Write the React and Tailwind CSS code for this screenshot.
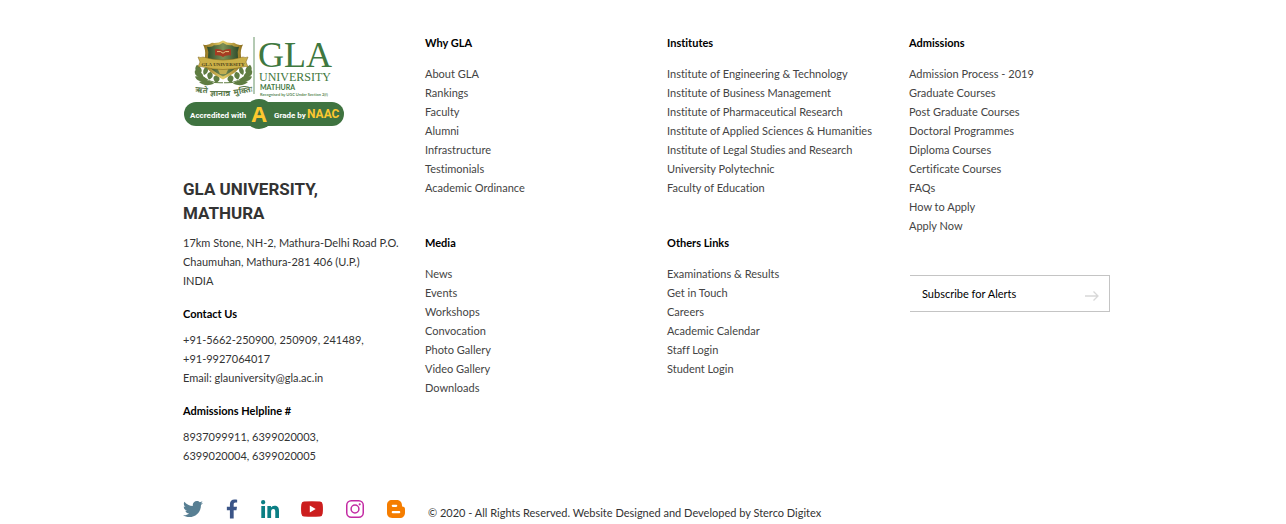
import React from "react";

const why = ["About GLA", "Rankings", "Faculty", "Alumni", "Infrastructure", "Testimonials", "Academic Ordinance"];
const media = ["News", "Events", "Workshops", "Convocation", "Photo Gallery", "Video Gallery", "Downloads"];
const institutes = [
  "Institute of Engineering & Technology",
  "Institute of Business Management",
  "Institute of Pharmaceutical Research",
  "Institute of Applied Sciences & Humanities",
  "Institute of Legal Studies and Research",
  "University Polytechnic",
  "Faculty of Education",
];
const others = ["Examinations & Results", "Get in Touch", "Careers", "Academic Calendar", "Staff Login", "Student Login"];
const admissions = [
  "Admission Process - 2019",
  "Graduate Courses",
  "Post Graduate Courses",
  "Doctoral Programmes",
  "Diploma Courses",
  "Certificate Courses",
  "FAQs",
  "How to Apply",
  "Apply Now",
];

function LinkGroup({ title, links }) {
  return (
    <nav aria-label={title}>
      <h3 className="font-bold text-black">{title}</h3>
      <ul className="mt-3 whitespace-nowrap text-[#444]">
        {links.map((l) => (
          <li key={l}>
            <a href="#" className="hover:underline">{l}</a>
          </li>
        ))}
      </ul>
    </nav>
  );
}

function Leaves() {
  return (
    <g fill="#5f7d42">
      <path d="M39 56C29 57 20 52 14 42" fill="none" stroke="#5f7d42" strokeWidth="1.200" />
      <path d="M16 45C11 43 10 37 13 33C18 37 19 41 16 45Z" />
      <path d="M19 50C12 49 10 45 11 40C17 42 20 45 19 50Z" />
      <path d="M24 54C17 56 12 53 11 48C18 47 22 49 24 54Z" />
      <path d="M30 57C24 61 18 59 15 55C21 52 27 53 30 57Z" />
      <path d="M20 46C18 41 20 37 23 35C25 40 24 44 20 46Z" />
      <path d="M25 52C22 47 23 43 27 42C30 46 29 50 25 52Z" />
      <path d="M32 56C28 51 29 47 33 46C37 50 36 54 32 56Z" />
    </g>
  );
}

function Logo() {
  return (
    <svg viewBox="0 0 161 94" className="h-[94px] w-[161px] overflow-visible" role="img" aria-label="GLA University Mathura">
      <defs>
        <linearGradient id="gold" x1="0" x2="1">
          <stop offset="0" stopColor="#8a6d1c" />
          <stop offset=".5" stopColor="#e6cf6a" />
          <stop offset="1" stopColor="#8a6d1c" />
        </linearGradient>
        <linearGradient id="field" x1="0" x2="1">
          <stop offset="0" stopColor="#2c4a2b" />
          <stop offset=".5" stopColor="#7d9055" />
          <stop offset="1" stopColor="#2c4a2b" />
        </linearGradient>
      </defs>
      <g transform="translate(1 3) scale(1 .78)">
        <Leaves />
        <g transform="translate(79 0) scale(-1 1)"><Leaves /></g>
      </g>
      <g transform="translate(0 2) scale(1 .8)">
        <path d="M20 8Q25 10 29 6Q35 7 40 3Q45 7 51 6Q55 10 60 8Q57 15 58 23V30C58 40 50 45 40 52C30 45 22 40 22 30V23Q23 15 20 8Z" fill="url(#gold)" />
        <path d="M24 11Q29 12 31 9Q36 10 40 6Q44 10 49 9Q51 12 56 11Q54 17 55 24V30C55 37 49 42 40 48C31 42 25 37 25 30V24Q26 17 24 11Z" fill="url(#field)" />
        <path d="M32 14C35 13 38 14 40 16C42 14 45 13 48 14V22C45 21 42 22 40 24C38 22 35 21 32 22Z" fill="#a63b22" />
        <path d="M34 17Q38 16 40 19Q42 16 46 17" fill="none" stroke="#ead990" strokeWidth="1" />
        <path d="M34 37Q40 34 46 37L43 45H37Z" fill="#c3ae50" />
      </g>
      <path d="M15 21Q18 22 20 21Q40 27 60 21Q62 22 65 21L63 26L65 31Q62 30 60 31Q40 36 20 31Q18 30 15 31L17 26Z" fill="#cbb048" stroke="#7b6018" strokeWidth=".5" />
      <text x="40" y="30" textAnchor="middle" fontSize="5" fontWeight="700" fill="#4b431a" fontFamily="Liberation Serif, serif">GLA UNIVERSITY</text>
      <g fontSize="8" fontWeight="700" fill="#5b7a4c" fontFamily="Noto Sans Devanagari, Noto Sans, sans-serif">
        <text x="12" y="56" transform="rotate(6 12 56)">ऋते</text>
        <text x="27" y="60">ज्ञानान्न</text>
        <text x="51" y="59" transform="rotate(-10 51 59)">मुक्तिः</text>
      </g>
      <path d="M71 1V58" stroke="#9bb99a" strokeWidth="1.500" />
      <g fill="#3f7840">
        <text x="75" y="31" fontSize="36" fontFamily="Liberation Serif, serif">GLA</text>
        <text x="76" y="45" fontSize="12" fontFamily="Liberation Serif, serif">UNIVERSITY</text>
        <text x="77" y="54" fontSize="7" fontWeight="700" fontFamily="Lato, sans-serif">MATHURA</text>
        <text x="77" y="60" fontSize="4" fontWeight="600" fontFamily="Lato, sans-serif">Recognised by UGC Under Section 2(f)</text>
      </g>
      <rect x="1" y="66" width="160" height="24" rx="12" fill="#3f7340" />
      <circle cx="76" cy="78" r="15" fill="#3f7340" />
      <g fontFamily="Roboto, sans-serif" fontWeight="700">
        <text x="7" y="82" fontSize="8" fill="#fff">Accredited with</text>
        <text x="91" y="82" fontSize="8" fill="#fff">Grade by</text>
        <text x="124" y="82" fontSize="12" fill="#fdc82f">NAAC</text>
      </g>
      <text x="76" y="86" textAnchor="middle" fontSize="22" fontWeight="700" fill="#fdc82f" fontFamily="Open Sans, sans-serif">A</text>
    </svg>
  );
}

function Social({ label, box, children, className }) {
  return (
    <a href="#" aria-label={label} className="block">
      <svg viewBox={box} fill="currentColor" className={className}>{children}</svg>
    </a>
  );
}

function SocialLinks() {
  return (
    <div className="flex items-center justify-between">
      <Social label="Twitter" box="0 0 512 512" className="size-5 text-[#587f93]">
        <path d="M459.370 151.716c.325 4.548.325 9.097.325 13.645 0 138.720-105.583 298.558-298.558 298.558-59.452 0-114.680-17.219-161.137-47.106 8.447.974 16.568 1.299 25.340 1.299 49.055 0 94.213-16.568 130.274-44.832-46.132-.975-84.792-31.188-98.112-72.772 6.498.974 12.995 1.624 19.818 1.624 9.421 0 18.843-1.300 27.614-3.573-48.081-9.747-84.143-51.980-84.143-102.985v-1.299c13.969 7.797 30.214 12.670 47.431 13.319-28.264-18.843-46.781-51.005-46.781-87.391 0-19.492 5.197-37.360 14.294-52.954 51.655 63.675 129.300 105.258 216.365 109.807-1.624-7.797-2.599-15.918-2.599-24.040 0-57.828 46.782-104.934 104.934-104.934 30.213 0 57.502 12.670 76.670 33.137 23.715-4.548 46.456-13.320 66.599-25.340-7.798 24.366-24.366 44.833-46.132 57.827 21.117-2.273 41.584-8.122 60.426-16.243-14.292 20.791-32.161 39.308-52.628 54.253z" />
      </Social>
      <Social label="Facebook" box="0 0 320 512" className="h-5 w-[12px] text-[#3b5587]">
        <path d="M279.140 288l14.220-92.660h-88.910v-60.130c0-25.350 12.420-50.060 52.240-50.060h40.420V6.260S260.430 0 225.360 0c-73.220 0-121.080 44.380-121.080 124.720v70.620H22.890V288h81.390v224h100.170V288z" />
      </Social>
      <Social label="LinkedIn" box="0 0 448 448" className="size-[18px] text-[#0b7f84]">
        <path d="M100.280 448H7.400V148.900h92.880zM53.790 108.100C24.090 108.100 0 83.500 0 53.800a53.790 53.790 0 0 1 107.580 0c0 29.700-24.100 54.300-53.790 54.300zM447.900 448h-92.680V302.400c0-34.700-.7-79.200-48.290-79.200-48.290 0-55.690 37.700-55.690 76.700V448h-92.780V148.900h89.080v40.800h1.300c12.400-23.500 42.690-48.300 87.880-48.300 94 0 111.280 61.900 111.280 142.300V448z" />
      </Social>
      <Social label="YouTube" box="0 0 22 16" className="h-4 w-[22px] text-[#cc1e1e]">
        <path fillRule="evenodd" d="M3 .6Q11-.2 19 .6Q21.400.8 21.700 3.500Q22.200 8 21.700 12.500Q21.400 15.100 19 15.400Q11 16.200 3 15.400Q.6 15.100.3 12.500Q-.2 8 .3 3.500Q.6.8 3 .6ZM8.800 4.600V11.400L14.700 8Z" />
      </Social>
      <Social label="Instagram" box="0 0 18 18" className="size-[18px] text-[#c32aa3]">
        <g fill="none" stroke="currentColor" strokeWidth="1.500">
          <rect x=".75" y=".75" width="16.500" height="16.500" rx="4.500" />
          <circle cx="9" cy="9" r="3.900" />
        </g>
        <circle cx="13.700" cy="4.300" r="1.100" />
      </Social>
      <Social label="Blogger" box="0 0 18 18" className="size-[18px] text-[#f57d00]">
        <path d="M5 0H9.500C13.500 0 15 2.500 15 5.500C15 7 16 6.600 17 7Q18 7.400 18 9V12.500C18 16 16 18 12.800 18H5.200C2 18 0 16 0 12.800V5C0 2 2 0 5 0Z" />
        <path d="M5.800 5.800H9.200M5.800 12.200H12.200" stroke="#fff" strokeWidth="2.200" strokeLinecap="round" />
      </Social>
    </div>
  );
}

export default function App() {
  return (
    <footer className="bg-white font-['Lato',sans-serif] text-[11px] leading-[19px] text-[#333] [font-variant-ligatures:none]">
      <div className="mx-auto max-w-[968px] pt-[33px]">
        <div className="grid grid-cols-4">
          <section className="pl-6">
            <a href="#" className="block pt-[3px]"><Logo /></a>
            <h2 className="mt-[47px] font-['Roboto',sans-serif] text-[17px] leading-6 font-bold">GLA UNIVERSITY,<br />MATHURA</h2>
            <address className="mt-2 whitespace-nowrap not-italic">
              17km Stone, NH-2, Mathura-Delhi Road P.O.<br />Chaumuhan, Mathura-281 406 (U.P.)<br />INDIA
            </address>
            <h3 className="mt-[14px] font-bold text-black">Contact Us</h3>
            <p className="mt-[7px]">
              +91-5662-250900, 250909, 241489,<br />+91-9927064017<br />Email: <a href="mailto:glauniversity@gla.ac.in">glauniversity@gla.ac.in</a>
            </p>
            <h3 className="mt-[14px] font-bold text-black">Admissions Helpline #</h3>
            <p className="mt-[7px]">8937099911, 6399020003,<br />6399020004, 6399020005</p>
          </section>
          <div className="grid grid-rows-[200px_auto] content-start pl-6">
            <LinkGroup title="Why GLA" links={why} />
            <LinkGroup title="Media" links={media} />
          </div>
          <div className="grid grid-rows-[200px_auto] content-start pl-6">
            <LinkGroup title="Institutes" links={institutes} />
            <LinkGroup title="Others Links" links={others} />
          </div>
          <div className="pl-6">
            <LinkGroup title="Admissions" links={admissions} />
            <button type="button" className="mt-10 ml-px flex h-[37px] w-[200px] items-center justify-between border border-l-0 border-[#c4c4c4] pr-[10px] pl-3 text-black">
              Subscribe for Alerts
              <svg viewBox="0 0 14 10" className="mt-1 h-[10px] w-[14px]" fill="none" stroke="#d8d8d8" strokeWidth="1.300" aria-hidden="true">
                <path d="M0 5H13M8.500 .5L13 5L8.500 9.500" />
              </svg>
            </button>
          </div>
        </div>
        <div className="mt-[30px] flex items-center pl-6">
          <div className="w-[222px]"><SocialLinks /></div>
          <p className="pt-2 pl-[23px]">© 2020 - All Rights Reserved. Website Designed and Developed by Sterco Digitex</p>
        </div>
      </div>
    </footer>
  );
}
